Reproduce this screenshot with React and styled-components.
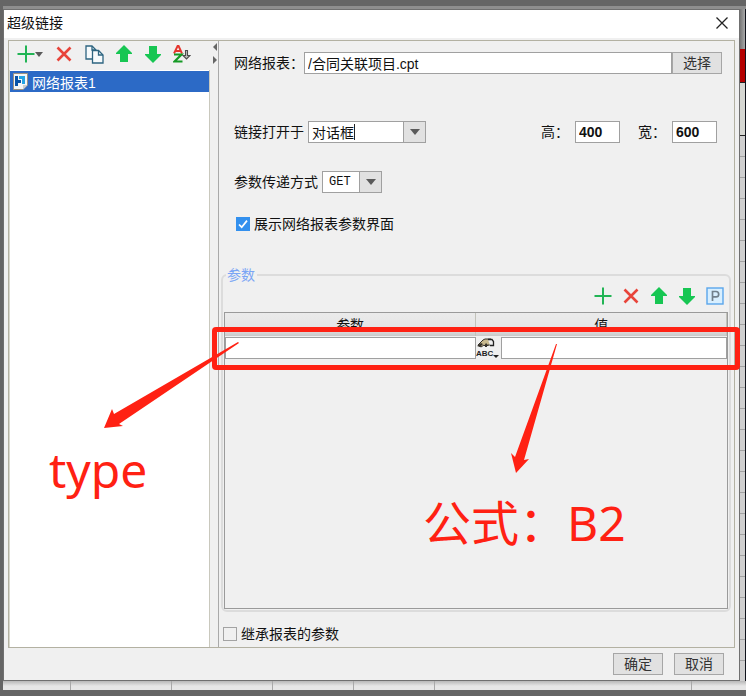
import React, { useState } from 'react';
import styled, { createGlobalStyle } from 'styled-components';

const GlobalStyle = createGlobalStyle`
  *, *::before, *::after {
    box-sizing: border-box;
  }

  body {
    margin: 0;
    background: #656565;
  }

  body, button, input, select {
    font-family: "Liberation Sans", "Noto Sans CJK SC", sans-serif;
    font-size: 14px;
    color: #111;
  }

  svg {
    flex: none;
  }
`;

const Page = styled.div`
  position: relative;
  display: grid;
  grid-template-columns: 3px minmax(0, 1fr) 6px;
  grid-template-rows: 6px 3px 1fr 9px 6px;
  min-height: 100vh;
  background: #656565;
`;

const TopStrip = styled.div`
  grid-column: 2 / 4;
  grid-row: 2;
  background: #8e8e8e;
`;

const RightStrip = styled.div`
  grid-column: 3;
  grid-row: 3 / 5;
  display: flex;
  flex-direction: column;
  border-right: 1px solid #10131c;
  background: #cfcfcf;
`;

const StripHead = styled.div`
  height: 40px;
  background: linear-gradient(90deg, #777, #a8a8a8);
`;

const StripRed = styled.div`
  height: 33px;
  background: #b40000;
`;

const StripCell = styled.div`
  height: 54px;
  border-top: 1px solid #222;
  border-bottom: 1px solid #222;
  background: #d6d7d2;
`;

const StripGrid = styled.div`
  flex: 1;
  background: repeating-linear-gradient(180deg, #cfcfcf 0 20px, #a2a2a2 20px 21px);
`;

const BottomStrip = styled.div`
  grid-column: 2 / 4;
  grid-row: 4;
  display: grid;
  grid-template-columns: 68px 101px 101px 81px 81px 1fr 54px;
  background: linear-gradient(180deg, #b8b8b8, #e6e6e6 5px);
`;

const StripColumn = styled.span`
  border-right: 1px solid #a8a8a8;
`;

const Dialog = styled.main`
  grid-column: 2;
  grid-row: 3;
  display: flex;
  flex-direction: column;
  border: 1px solid #707070;
  background: #f0f0f0;
`;

const TitleBar = styled.header`
  display: flex;
  align-items: center;
  justify-content: space-between;
  height: 28px;
  padding: 0 9px 2px 3px;
  background: #fff;
`;

const Title = styled.h1`
  margin: 0;
  font-size: 14px;
  font-weight: 400;
  line-height: 20px;
`;

const IconButton = styled.button`
  display: flex;
  align-items: center;
  justify-content: center;
  flex: none;
  width: ${props => props.$width || 16}px;
  height: 20px;
  padding: 0;
  border: 0;
  background: none;
`;

const Body = styled.div`
  display: flex;
  flex: 1;
  margin: 2px 4px 0;
  border: 1px solid #b3b1a2;
`;

const Sidebar = styled.aside`
  display: flex;
  flex-direction: column;
  flex: none;
  width: 201px;
`;

const SideToolbar = styled.div`
  display: flex;
  align-items: center;
  height: 29px;
  padding: 0 8px 3px;
  gap: 13px;
`;

const LinkList = styled.ul`
  flex: 1;
  margin: 0;
  padding: 1px 0 0;
  list-style: none;
  border-right: 1px solid #c9c8bd;
  border-left: 1px solid #d9d8cc;
  background: #fff;
`;

const LinkItem = styled.li`
  display: flex;
  align-items: center;
  gap: 4px;
  height: 21px;
  padding-left: 3px;
  background: #2c6ac6;
  color: #fff;
`;

const Splitter = styled.div`
  display: flex;
  flex-direction: column;
  align-items: flex-end;
  gap: 5px;
  flex: none;
  width: 8px;
  padding: 2px 0 0;
`;

const SplitButton = styled.button`
  display: flex;
  padding: 0;
  border: 0;
  background: none;
`;

const Panel = styled.section`
  display: flex;
  flex-direction: column;
  flex: 1;
  min-width: 0;
  padding-top: 11px;
  border-left: 1px solid #a9a9a9;
`;

const Form = styled.div`
  display: flex;
  flex-direction: column;
  padding: 0 12px 0 15px;
`;

const FormRow = styled.div`
  display: flex;
  align-items: center;
  height: 22px;
  gap: ${props => props.$gap || 0}px;
  margin-bottom: ${props => props.$space}px;
`;

const Label = styled.label`
  flex: none;
  line-height: 22px;
`;

const TextInput = styled.input`
  flex: 1;
  min-width: 0;
  height: 22px;
  padding: 0 3px;
  border: 1px solid #a0a0a0;
  outline: none;
  background: #fff;
`;

const SizeGroup = styled.div`
  display: flex;
  align-items: center;
  gap: 18px;
  margin: 0 5px 0 auto;
`;

const SizeField = styled.div`
  display: flex;
  align-items: center;
  gap: 6px;
`;

const SizeInput = styled(TextInput)`
  flex: none;
  width: 45px;
  font-weight: bold;
`;

const PushButton = styled.button`
  flex: none;
  width: 50px;
  height: 22px;
  padding: 0;
  border: 1px solid #a6a6a6;
  background: #e1e1e1;
  color: #333;
  line-height: 20px;
`;

const ComboBox = styled.div`
  display: flex;
  align-items: center;
  width: ${props => props.$width}px;
  height: 22px;
  border: 1px solid #a0a0a0;
  background: #fff;
`;

const ComboInput = styled.input`
  field-sizing: content;
  height: 20px;
  padding: 0 0 0 3px;
  border: 0;
  outline: none;
  background: none;
`;

const Caret = styled.span`
  width: 1px;
  height: 16px;
  background: #222;
`;

const ComboSelect = styled.select`
  appearance: none;
  flex: 1;
  min-width: 0;
  height: 20px;
  padding: 0 0 0 6px;
  border: 0;
  outline: none;
  background: none;
  font-family: "Liberation Mono", monospace;
  font-size: 12px;
`;

const ComboArrow = styled.button`
  display: flex;
  align-items: center;
  justify-content: center;
  flex: none;
  width: 22px;
  height: 20px;
  margin-left: auto;
  padding: 0;
  border: 0;
  border-left: 1px solid #a0a0a0;
  background: #e1e1e1;
`;

const CheckLabel = styled.label`
  display: flex;
  align-items: center;
  gap: 4px;
  line-height: 22px;
  padding-left: ${props => props.$indent || 0}px;
`;

const CheckBox = styled.input`
  appearance: none;
  width: 14px;
  height: 14px;
  margin: 0;
  border: 1px solid #a3a3a3;
  background: #f0f0f0;

  &:checked {
    border-color: #3390ee;
    background: #3390ee url("data:image/svg+xml,%3Csvg xmlns='http://www.w3.org/2000/svg' viewBox='0 0 12 12'%3E%3Cpath d='M2 6.5 4.7 9.2 10 2.6' fill='none' stroke='white' stroke-width='1.7'/%3E%3C/svg%3E");
  }
`;

const ParamGroup = styled.fieldset`
  display: flex;
  flex-direction: column;
  flex: 1;
  min-width: 0;
  margin: 0 3px 0 2px;
  padding: 0 1px 1px;
  border: 2px solid #dcdcdc;
  border-radius: 6px;
`;

const Legend = styled.legend`
  height: 20px;
  margin-left: 2px;
  padding: 0 2px 0 1px;
  color: #7aa5f5;
  line-height: 20px;
`;

const ParamToolbar = styled.div`
  display: flex;
  align-items: center;
  justify-content: flex-end;
  gap: 12px;
  height: 22px;
  margin-bottom: 5px;
  padding-right: 5px;
`;

const TableFrame = styled.div`
  position: relative;
  flex: 1;
  border: 1px solid #9a9a9a;
`;

const ParamTable = styled.table`
  width: 100%;
  table-layout: fixed;
  border-collapse: collapse;
`;

const HeadCell = styled.th`
  height: 23px;
  padding: 0;
  border-right: 1px solid #c2c2ba;
  background: linear-gradient(180deg, #ebebeb, #e4e4e4 70%, #c9c9c9);
  font-weight: 400;
  line-height: 22px;
`;

const Cell = styled.td`
  padding: 1px 0 0;
`;

const CellContent = styled.div`
  display: flex;
  align-items: center;
  gap: 1px;
`;

const Highlight = styled.div`
  position: absolute;
  top: 14px;
  left: -13px;
  right: -13px;
  height: 43px;
  border: 5px solid #ff2113;
  border-radius: 4px;
  pointer-events: none;
`;

const InheritRow = styled.div`
  display: flex;
  align-items: center;
  height: 22px;
  margin: 11px 0 2px 4px;
`;

const Footer = styled.footer`
  display: flex;
  justify-content: flex-end;
  gap: 11px;
  padding: 5px 15px;
`;

const Annotations = styled.div`
  position: absolute;
  inset: 0;
  overflow: hidden;
  pointer-events: none;
`;

const Note = styled.span`
  position: absolute;
  left: ${props => props.$x}px;
  top: ${props => props.$y}px;
  color: #ff2113;
  font-family: "Noto Sans", "Noto Sans CJK SC", sans-serif;
  font-size: 48px;
  line-height: 48px;
  white-space: nowrap;
`;

const PlusIcon = ({ size = 18 }) => (
  <svg width={size} height={size} viewBox="0 0 18 18">
    <path d="M9 0.5v17M0.5 9h17" stroke="#22b455" strokeWidth="2" />
  </svg>
);

const DeleteIcon = () => (
  <svg width="16" height="16" viewBox="0 0 16 16">
    <path d="M1.5 1.5l13 13M14.5 1.5l-13 13" stroke="#e8443a" strokeWidth="2.6" />
  </svg>
);

const UpIcon = () => (
  <svg width="16" height="18" viewBox="0 0 16 18">
    <path d="M8 0l8 8v1h-4v8H4V9H0V8z" fill="#17c653" />
  </svg>
);

const DownIcon = () => (
  <svg width="16" height="18" viewBox="0 0 16 18">
    <path d="M8 18l8-8V9h-4V1H4v8H0v1z" fill="#17c653" />
  </svg>
);

const CopyIcon = () => (
  <svg width="19" height="19" viewBox="0 0 19 19">
    <path d="M1 1h6l4 4v9H1z" fill="#f6fafc" stroke="#2d6480" strokeWidth="1.3" />
    <path d="M7.5 5.5h6l4.5 4.5v8H7.5z" fill="#f6fafc" stroke="#2d6480" strokeWidth="1.3" />
    <path d="M7 1v4h4M13.5 5.5V10H18" fill="none" stroke="#2d6480" strokeWidth="1.3" />
  </svg>
);

const SortIcon = () => (
  <svg width="18" height="18" viewBox="0 0 18 18">
    <path d="M1 8.5L4.6 1h1L9 8.5M2.5 6h5.5" fill="none" stroke="#e5352d" strokeWidth="1.9" />
    <path d="M1 9.5h7.5L1.5 16.5h8" fill="none" stroke="#159a25" strokeWidth="2.2" />
    <path d="M12.5 5.5h2v5h2.5l-3.5 3.5-3.5-3.5h2.5z" fill="#bdbdbd" stroke="#4c4c4c" strokeWidth="1.1" />
  </svg>
);

const ReportIcon = () => (
  <svg width="15" height="17" viewBox="0 0 15 17">
    <path d="M0.5 0.5h14v11.5l-4.5 4.5H0.5z" fill="#f5f7f8" stroke="#9d9180" />
    <path d="M2 3h3v4h3v3H5v3H2z" fill="#0a54a8" />
    <path d="M6 3h6v8H9V6H6z" fill="#25a4e4" />
    <path d="M10 16.5V12h4.5z" fill="#c9cfd3" />
  </svg>
);

const ParameterIcon = () => (
  <svg width="18" height="18" viewBox="0 0 18 18">
    <rect x="1" y="1" width="16" height="16" fill="#d8efff" stroke="#5aa6ec" strokeWidth="1.4" />
    <path d="M6.5 14V4.5H10a2.6 2.6 0 0 1 0 5.4H6.5" fill="none" stroke="#71808c" strokeWidth="1.7" />
  </svg>
);

const TypeIcon = () => (
  <svg width="24" height="21" viewBox="0 0 24 21">
    <path d="M2 7l5-5 2-1h6v6h-3l-2 2-2-2-3 2z" fill="#c8b98e" stroke="#343029" />
    <path d="M1 8l4-3 2 1-3 3zM8 8l2-3 3 3z" fill="#343029" />
    <path d="M12 1.5h4l1.5 2v4H14" fill="#eee" stroke="#222" strokeWidth="1.3" />
    <text x="0" y="18" fontFamily="Liberation Sans, sans-serif" fontSize="8" fontWeight="bold" fill="#222">ABC</text>
    <path d="M17 17h6l-3 3z" fill="#222" />
  </svg>
);

const TriangleIcon = ({ width = 10, height = 6 }) => (
  <svg width={width} height={height} viewBox="0 0 10 6">
    <path d="M0 0h10L5 6z" fill="#5a5a5a" />
  </svg>
);

const App = () => {
  const [report, setReport] = useState('/合同关联项目.cpt');
  const [target, setTarget] = useState('对话框');
  const [height, setHeight] = useState('400');
  const [width, setWidth] = useState('600');
  const [showParams, setShowParams] = useState(true);
  const [inherit, setInherit] = useState(false);

  return (
    <>
      <GlobalStyle />
      <Page>
        <TopStrip />
        <RightStrip>
          <StripHead />
          <StripRed />
          <StripCell />
          <StripGrid />
        </RightStrip>
        <BottomStrip>
          {[1, 2, 3, 4, 5, 6].map(column => <StripColumn key={column} />)}
        </BottomStrip>

        <Dialog>
          <TitleBar>
            <Title>超级链接</Title>
            <IconButton aria-label="关闭">
              <svg width="12" height="12" viewBox="0 0 12 12">
                <path d="M0.5 0.5l11 11M11.5 0.5l-11 11" stroke="#222" strokeWidth="1.3" />
              </svg>
            </IconButton>
          </TitleBar>

          <Body>
            <Sidebar>
              <SideToolbar>
                <IconButton $width={26} aria-label="添加">
                  <PlusIcon />
                  <TriangleIcon width={8} height={5} />
                </IconButton>
                <IconButton aria-label="删除"><DeleteIcon /></IconButton>
                <IconButton $width={18} aria-label="复制"><CopyIcon /></IconButton>
                <IconButton aria-label="上移"><UpIcon /></IconButton>
                <IconButton aria-label="下移"><DownIcon /></IconButton>
                <IconButton aria-label="排序"><SortIcon /></IconButton>
              </SideToolbar>
              <LinkList>
                <LinkItem>
                  <ReportIcon />
                  网络报表1
                </LinkItem>
              </LinkList>
            </Sidebar>

            <Splitter>
              <SplitButton aria-label="收起">
                <svg width="5" height="8" viewBox="0 0 5 8"><path d="M4 0v8L0 4z" fill="#666" /></svg>
              </SplitButton>
              <SplitButton aria-label="展开">
                <svg width="5" height="8" viewBox="0 0 5 8"><path d="M0 0v8l4-4z" fill="#666" /></svg>
              </SplitButton>
            </Splitter>

            <Panel>
              <Form>
                <FormRow $space={47}>
                  <Label htmlFor="report">网络报表：</Label>
                  <TextInput id="report" value={report} onChange={e => setReport(e.target.value)} />
                  <PushButton>选择</PushButton>
                </FormRow>

                <FormRow $gap={4} $space={28}>
                  <Label htmlFor="target">链接打开于</Label>
                  <ComboBox $width={118}>
                    <ComboInput id="target" value={target} onChange={e => setTarget(e.target.value)} />
                    <Caret />
                    <ComboArrow aria-label="打开列表"><TriangleIcon /></ComboArrow>
                  </ComboBox>
                  <SizeGroup>
                    <SizeField>
                      <Label htmlFor="height">高：</Label>
                      <SizeInput id="height" value={height} onChange={e => setHeight(e.target.value)} />
                    </SizeField>
                    <SizeField>
                      <Label htmlFor="width">宽：</Label>
                      <SizeInput id="width" value={width} onChange={e => setWidth(e.target.value)} />
                    </SizeField>
                  </SizeGroup>
                </FormRow>

                <FormRow $gap={4} $space={20}>
                  <Label htmlFor="method">参数传递方式</Label>
                  <ComboBox $width={60}>
                    <ComboSelect id="method" defaultValue="GET">
                      <option>GET</option>
                      <option>POST</option>
                    </ComboSelect>
                    <ComboArrow as="span"><TriangleIcon /></ComboArrow>
                  </ComboBox>
                </FormRow>

                <FormRow $space={30}>
                  <CheckLabel $indent={2}>
                    <CheckBox
                      type="checkbox"
                      checked={showParams}
                      onChange={e => setShowParams(e.target.checked)}
                    />
                    展示网络报表参数界面
                  </CheckLabel>
                </FormRow>
              </Form>

              <ParamGroup>
                <Legend>参数</Legend>
                <ParamToolbar>
                  <IconButton aria-label="添加参数"><PlusIcon /></IconButton>
                  <IconButton aria-label="删除参数"><DeleteIcon /></IconButton>
                  <IconButton aria-label="上移参数"><UpIcon /></IconButton>
                  <IconButton aria-label="下移参数"><DownIcon /></IconButton>
                  <IconButton aria-label="选择参数"><ParameterIcon /></IconButton>
                </ParamToolbar>
                <TableFrame>
                  <ParamTable>
                    <thead>
                      <tr>
                        <HeadCell>参数</HeadCell>
                        <HeadCell>值</HeadCell>
                      </tr>
                    </thead>
                    <tbody>
                      <tr>
                        <Cell>
                          <CellContent>
                            <TextInput aria-label="参数" />
                          </CellContent>
                        </Cell>
                        <Cell>
                          <CellContent>
                            <IconButton $width={24} aria-label="值类型"><TypeIcon /></IconButton>
                            <TextInput aria-label="值" />
                          </CellContent>
                        </Cell>
                      </tr>
                    </tbody>
                  </ParamTable>
                  <Highlight />
                </TableFrame>
              </ParamGroup>

              <InheritRow>
                <CheckLabel>
                  <CheckBox
                    type="checkbox"
                    checked={inherit}
                    onChange={e => setInherit(e.target.checked)}
                  />
                  继承报表的参数
                </CheckLabel>
              </InheritRow>
            </Panel>
          </Body>

          <Footer>
            <PushButton>确定</PushButton>
            <PushButton>取消</PushButton>
          </Footer>
        </Dialog>

        <Annotations>
          <svg width="746" height="696" viewBox="0 0 746 696">
            <path d="M104 428l8-19 2 5 124-72 1 1-120 81 4 2z" fill="#ff2113" />
            <path d="M516 473l-5-20 4 4 41-113 1 0-33 116 5-1z" fill="#ff2113" />
          </svg>
          <Note $x={49} $y={446}>type</Note>
          <Note $x={423} $y={499}>公式：B2</Note>
        </Annotations>
      </Page>
    </>
  );
};

export default App;
